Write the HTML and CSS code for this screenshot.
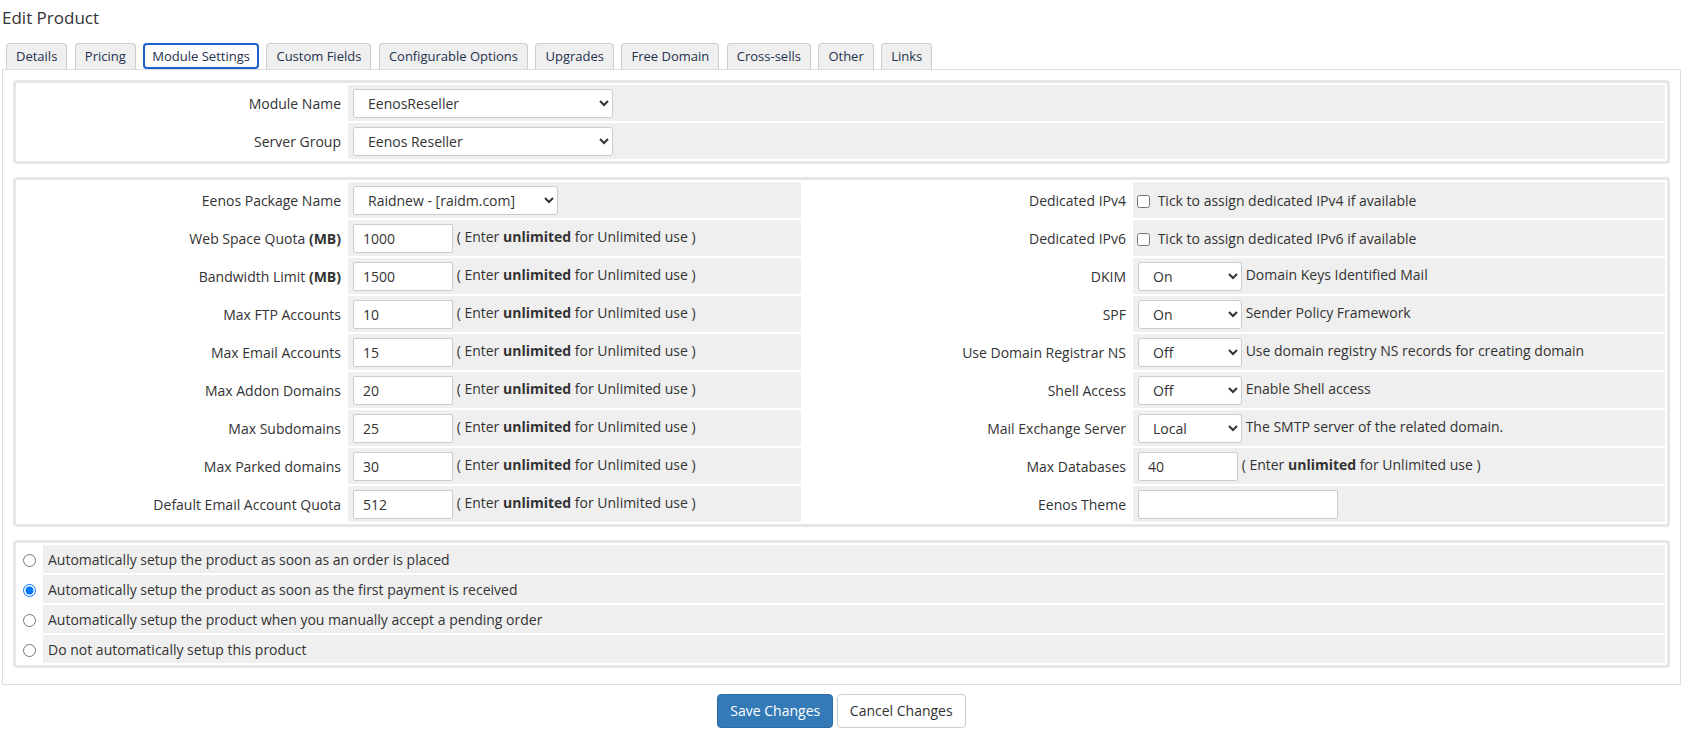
FILE: index.html
```html
<!DOCTYPE html>
<html>
<head>
    <title>Edit Product</title>
    <link rel="stylesheet" href="styles.css">
</head>
<body>
<div class="page">
<h1>Edit Product</h1>

<ul class="tabs">
    <li>Details</li>
    <li>Pricing</li>
    <li class="active">Module Settings</li>
    <li>Custom Fields</li>
    <li>Configurable Options</li>
    <li>Upgrades</li>
    <li>Free Domain</li>
    <li>Cross-sells</li>
    <li>Other</li>
    <li>Links</li>
</ul>

<div class="tab-content">
    <table class="form module-table">
        <colgroup><col class="col-label"><col></colgroup>
        <tr>
            <td class="fieldlabel">Module Name</td>
            <td class="fieldarea"><select class="select-module"><option>EenosReseller</option></select></td>
        </tr>
        <tr>
            <td class="fieldlabel">Server Group</td>
            <td class="fieldarea"><select class="select-module"><option>Eenos Reseller</option></select></td>
        </tr>
    </table>

    <table class="form config-table">
        <colgroup><col class="col-label"><col class="col-field"><col class="col-label"><col></colgroup>
        <tr>
            <td class="fieldlabel">Eenos Package Name</td>
            <td class="fieldarea"><select class="select-package"><option>Raidnew - [raidm.com]</option></select></td>
            <td class="fieldlabel">Dedicated IPv4</td>
            <td class="fieldarea"><label><input type="checkbox"> Tick to assign dedicated IPv4 if available</label></td>
        </tr>
        <tr>
            <td class="fieldlabel">Web Space Quota <b>(MB)</b></td>
            <td class="fieldarea"><input type="text" class="input-small" value="1000"> ( Enter <b>unlimited</b> for Unlimited use )</td>
            <td class="fieldlabel">Dedicated IPv6</td>
            <td class="fieldarea"><label><input type="checkbox"> Tick to assign dedicated IPv6 if available</label></td>
        </tr>
        <tr>
            <td class="fieldlabel">Bandwidth Limit <b>(MB)</b></td>
            <td class="fieldarea"><input type="text" class="input-small" value="1500"> ( Enter <b>unlimited</b> for Unlimited use )</td>
            <td class="fieldlabel">DKIM</td>
            <td class="fieldarea"><select class="select-small"><option>On</option><option>Off</option></select> Domain Keys Identified Mail</td>
        </tr>
        <tr>
            <td class="fieldlabel">Max FTP Accounts</td>
            <td class="fieldarea"><input type="text" class="input-small" value="10"> ( Enter <b>unlimited</b> for Unlimited use )</td>
            <td class="fieldlabel">SPF</td>
            <td class="fieldarea"><select class="select-small"><option>On</option><option>Off</option></select> Sender Policy Framework</td>
        </tr>
        <tr>
            <td class="fieldlabel">Max Email Accounts</td>
            <td class="fieldarea"><input type="text" class="input-small" value="15"> ( Enter <b>unlimited</b> for Unlimited use )</td>
            <td class="fieldlabel">Use Domain Registrar NS</td>
            <td class="fieldarea"><select class="select-small"><option>Off</option><option>On</option></select> Use domain registry NS records for creating domain</td>
        </tr>
        <tr>
            <td class="fieldlabel">Max Addon Domains</td>
            <td class="fieldarea"><input type="text" class="input-small" value="20"> ( Enter <b>unlimited</b> for Unlimited use )</td>
            <td class="fieldlabel">Shell Access</td>
            <td class="fieldarea"><select class="select-small"><option>Off</option><option>On</option></select> Enable Shell access</td>
        </tr>
        <tr>
            <td class="fieldlabel">Max Subdomains</td>
            <td class="fieldarea"><input type="text" class="input-small" value="25"> ( Enter <b>unlimited</b> for Unlimited use )</td>
            <td class="fieldlabel">Mail Exchange Server</td>
            <td class="fieldarea"><select class="select-small"><option>Local</option><option>Remote</option></select> The SMTP server of the related domain.</td>
        </tr>
        <tr>
            <td class="fieldlabel">Max Parked domains</td>
            <td class="fieldarea"><input type="text" class="input-small" value="30"> ( Enter <b>unlimited</b> for Unlimited use )</td>
            <td class="fieldlabel">Max Databases</td>
            <td class="fieldarea"><input type="text" class="input-small" value="40"> ( Enter <b>unlimited</b> for Unlimited use )</td>
        </tr>
        <tr>
            <td class="fieldlabel">Default Email Account Quota</td>
            <td class="fieldarea"><input type="text" class="input-small" value="512"> ( Enter <b>unlimited</b> for Unlimited use )</td>
            <td class="fieldlabel">Eenos Theme</td>
            <td class="fieldarea"><input type="text" class="input-medium" value=""></td>
        </tr>
    </table>

    <table class="form setup-table">
        <colgroup><col class="col-radio"><col></colgroup>
        <tr>
            <td class="fieldlabel"><input type="radio" name="autosetup" id="setup-order"></td>
            <td class="fieldarea"><label for="setup-order">Automatically setup the product as soon as an order is placed</label></td>
        </tr>
        <tr>
            <td class="fieldlabel"><input type="radio" name="autosetup" id="setup-payment" checked></td>
            <td class="fieldarea"><label for="setup-payment">Automatically setup the product as soon as the first payment is received</label></td>
        </tr>
        <tr>
            <td class="fieldlabel"><input type="radio" name="autosetup" id="setup-accept"></td>
            <td class="fieldarea"><label for="setup-accept">Automatically setup the product when you manually accept a pending order</label></td>
        </tr>
        <tr>
            <td class="fieldlabel"><input type="radio" name="autosetup" id="setup-none"></td>
            <td class="fieldarea"><label for="setup-none">Do not automatically setup this product</label></td>
        </tr>
    </table>
</div>

<div class="buttons">
    <button class="btn btn-primary">Save Changes</button>
    <button class="btn btn-default">Cancel Changes</button>
</div>
</div>
</body>
</html>
```

FILE: styles.css
```css
body {
    margin: 0;
    font-family: "Open Sans", sans-serif;
    font-size: 14px;
    color: #333;
}

.page {
    padding: 0 11px 0 2px;
}

h1 {
    margin: 0;
    padding-top: 7px;
    font-size: 17px;
    font-weight: normal;
    line-height: 22px;
}

.tabs {
    display: flex;
    gap: 7.5px;
    list-style: none;
    margin: 14px 0 0 0;
    padding: 0 0 0 4px;
}

.tabs li {
    height: 26px;
    box-sizing: border-box;
    padding: 0 9px;
    border: 1px solid #ccc;
    border-bottom: none;
    border-radius: 4px 4px 0 0;
    background-color: #efefef;
    color: #23314d;
    font-size: 13px;
    line-height: 25px;
    cursor: pointer;
}

.tabs li.active {
    background-color: #fff;
    border: 2px solid #1b5fcf;
    border-radius: 4px;
    padding: 0 7px;
    line-height: 22px;
}

.tab-content {
    border: 1px solid #ddd;
    padding: 10px 10px 16px 10px;
}

table.form {
    width: 100%;
    table-layout: fixed;
    border-collapse: separate;
    border-spacing: 2px;
    border: 3px solid #e3e7ea;
    border-radius: 4px;
}

.config-table {
    margin-top: 13px;
}

.setup-table {
    margin-top: 13px;
}

.col-label {
    width: 328px;
}

.col-field {
    width: 453px;
}

.col-radio {
    width: 23px;
}

table.form td {
    height: 36px;
    padding: 0 5px;
    white-space: nowrap;
}

table.form td.fieldlabel {
    text-align: right;
    background-color: #fff;
}

table.form td.fieldarea {
    background-color: #efefef;
}

.setup-table td {
    height: 28px !important;
}

.setup-table td.fieldlabel {
    padding: 0 5px;
    text-align: left;
}

input[type="text"],
select {
    height: 29px;
    box-sizing: border-box;
    border: 1px solid #ccc;
    border-radius: 2px;
    background-color: #fff;
    font-family: "Open Sans", sans-serif;
    font-size: 14px;
    color: #333;
    vertical-align: middle;
}

input[type="text"] {
    padding: 0 9px;
}

select {
    padding: 0 6px 0 10px;
    border-radius: 3px;
}

.input-small {
    width: 100px;
}

.input-medium {
    width: 200px;
}

.select-module {
    width: 260px;
}

.select-package {
    width: 205px;
}

.select-small {
    width: 104px;
}

input[type="checkbox"] {
    margin: 0 4px 0 -1px;
    vertical-align: -2px;
}

input[type="radio"] {
    margin: 0;
    vertical-align: middle;
}

.buttons {
    text-align: center;
    margin-top: 9px;
}

.btn {
    font-family: "Open Sans", sans-serif;
    font-size: 14px;
    line-height: 20px;
    padding: 6px 12px;
    border: 1px solid transparent;
    border-radius: 4px;
    cursor: pointer;
}

.btn-primary {
    background-color: #337ab7;
    border-color: #2e6da4;
    color: #fff;
}

.btn-default {
    background-color: #fff;
    border-color: #ccc;
    color: #333;
}
```
